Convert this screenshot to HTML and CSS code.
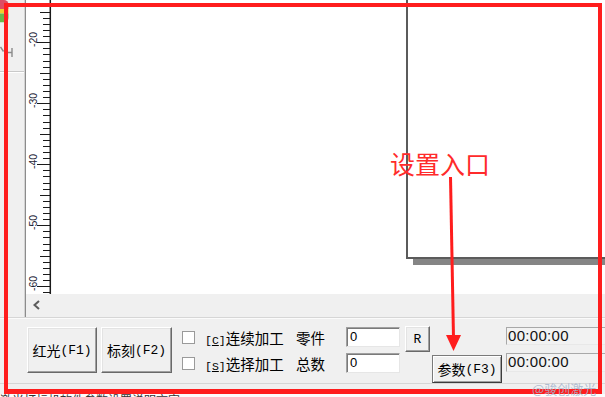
FILE: index.html
```html
<!DOCTYPE html>
<html lang="zh-CN">
<head>
<meta charset="utf-8">
<title>设置入口</title>
<link rel="stylesheet" href="styles.css">
</head>
<body>
<div class="app">
  <div class="top">
    <div class="toolstrip">
      <svg class="lamp" width="10" height="23" viewBox="0 0 10 23">
        <defs>
          <clipPath id="lampclip"><rect x="-6" y="0" width="14.5" height="22.5" rx="4.5"/></clipPath>
        </defs>
        <g clip-path="url(#lampclip)">
          <rect x="-6" y="0" width="16" height="9" fill="#dd4d63"/>
          <rect x="-6" y="9" width="16" height="4.5" fill="#f2cf2a"/>
          <rect x="-6" y="13.5" width="16" height="9" fill="#69b94a"/>
        </g>
      </svg>
      <svg class="tool-glyph" width="14" height="14" viewBox="0 0 14 14">
        <path d="M0.5 2 L3.5 6.5 M12 3 V12 M6.5 7.5 H12" stroke="#8a8a8a" stroke-width="1.4" fill="none"/>
      </svg>
      <div class="tool-sep"></div>
    </div>
    <div class="view">
      <div class="canvas">
        <svg class="ruler" width="26" height="294" viewBox="0 0 26 294">
          <path class="ticks" d="M17 6.5H24M17 18.5H24M17 24.5H24M17 30.5H24M17 36.5H24M17 48.5H24M17 54.5H24M17 61.5H24M17 67.5H24M17 79.5H24M17 85.5H24M17 91.5H24M17 97.5H24M17 109.5H24M17 115.5H24M17 122.5H24M17 128.5H24M17 140.5H24M17 146.5H24M17 152.5H24M17 158.5H24M17 170.5H24M17 176.5H24M17 183.5H24M17 189.5H24M17 201.5H24M17 207.5H24M17 213.5H24M17 219.5H24M17 231.5H24M17 237.5H24M17 244.5H24M17 250.5H24M17 262.5H24M17 268.5H24M17 274.5H24M17 280.5H24M17 292.5H24M14 12.5H24M14 73.5H24M14 134.5H24M14 195.5H24M14 256.5H24M11 42.5H24M11 103.5H24M11 164.5H24M11 225.5H24M11 286.5H24"/>
          <line class="baseline" x1="24.3" y1="0" x2="24.3" y2="294"/>
          <text class="rlabel" transform="translate(10.5 47) rotate(-90)">-20</text>
          <text class="rlabel" transform="translate(10.5 108) rotate(-90)">-30</text>
          <text class="rlabel" transform="translate(10.5 169) rotate(-90)">-40</text>
          <text class="rlabel" transform="translate(10.5 230) rotate(-90)">-50</text>
          <text class="rlabel" transform="translate(10.5 291) rotate(-90)">-60</text>
        </svg>
        <div class="page"></div>
      </div>
      <div class="hscroll">
        <svg class="scroll-left" width="20" height="23" viewBox="0 0 20 23">
          <path d="M13 7 L8.5 11 L13 15" stroke="#5c5c5c" stroke-width="2" fill="none"/>
        </svg>
      </div>
    </div>
  </div>

  <div class="panel">
    <button class="btn btn-big">红光<span class="lat">(F1)</span></button>
    <button class="btn btn-big btn-second">标刻<span class="lat">(F2)</span></button>
    <div class="controls">
      <span class="check r1"></span>
      <span class="label r1"><span class="lat-s">[<u>C</u>]</span>连续加工</span>
      <span class="count-label r1">零件</span>
      <span class="field r1">0</span>
      <button class="btn btn-r r1"><span class="lat">R</span></button>
      <span class="time r1">00:00:00</span>

      <span class="check r2"></span>
      <span class="label r2"><span class="lat-s">[<u>S</u>]</span>选择加工</span>
      <span class="count-label r2">总数</span>
      <span class="field r2">0</span>
      <button class="btn btn-param r2">参数<span class="lat">(F3)</span></button>
      <span class="time r2">00:00:00</span>
    </div>
  </div>
  <div class="panel-foot"></div>
  <div class="footer"><span class="footer-text">激光打标机软件参数设置说明文字</span></div>

  <div class="annot-box"></div>
  <div class="annot-text">设置入口</div>
  <svg class="annot-arrow" width="605" height="397" viewBox="0 0 605 397">
    <path d="M450.5 177 L453.5 338" stroke="#ff1d1d" stroke-width="3" fill="none"/>
    <polygon points="446,335 461,335 453.5,351" fill="#ff1d1d"/>
  </svg>
  <div class="watermark">@骏创激光</div>
</div>
</body>
</html>
```

FILE: styles.css
```css
* { box-sizing: border-box; }

html, body {
  margin: 0;
  padding: 0;
}

body {
  width: 605px;
  height: 397px;
  overflow: hidden;
  background: #f0f0f0;
  font-family: "Noto Sans CJK SC", sans-serif;
  color: #000;
}

.app {
  position: relative;
  width: 605px;
  height: 397px;
  display: flex;
  flex-direction: column;
  overflow: hidden;
}

/* ---------- top area ---------- */
.top {
  display: flex;
  height: 317px;
  flex: none;
}

.toolstrip {
  width: 25px;
  flex: none;
  border-right: 1px solid #d3d3d3;
  display: flex;
  flex-direction: column;
}

.lamp { display: block; }

.tool-glyph {
  display: block;
  margin-top: 22px;
}

.tool-sep {
  margin-top: 12px;
  height: 2px;
  border-top: 1px solid #c9c9c9;
  border-bottom: 1px solid #ffffff;
}

.view {
  flex: 1;
  min-width: 0;
  border-left: 1px solid #8c8c8c;
  display: flex;
  flex-direction: column;
}

.canvas {
  height: 294px;
  flex: none;
  background: #fff;
  position: relative;
  overflow: hidden;
}

.ruler {
  position: absolute;
  left: 0;
  top: 0;
  display: block;
}

.ticks {
  stroke: #1a1a1a;
  stroke-width: 1;
  fill: none;
}

.baseline {
  stroke: #1a1a1a;
  stroke-width: 1.5;
}

.rlabel {
  font-family: "Liberation Sans", sans-serif;
  font-size: 10.5px;
  fill: #1f2637;
}

.page {
  position: absolute;
  left: 380px;
  top: -4px;
  width: 320px;
  height: 263px;
  background: #fff;
  border-left: 2px solid #5b5b5b;
  border-bottom: 2px solid #5b5b5b;
  box-shadow: 7px 6px 0 #858585;
}

.hscroll {
  height: 23px;
  flex: none;
  background: #f0f0f0;
}

.scroll-left { display: block; }

/* ---------- bottom panel ---------- */
.panel {
  height: 67px;
  flex: none;
  border-top: 1px solid #d6d6d6;
  border-bottom: 1px solid #d6d6d6;
  box-shadow: inset 0 1px 0 #fbfbfb;
  display: flex;
  align-items: flex-start;
  padding: 9px 0 0 27px;
  overflow: hidden;
}

.btn {
  margin: 0;
  padding: 0;
  background: #f0f0f0;
  border: 1px solid;
  border-color: #ffffff #696969 #696969 #ffffff;
  box-shadow: inset -1px -1px 0 #a0a0a0, inset 1px 1px 0 #e3e3e3;
  font-family: "Noto Sans CJK SC", sans-serif;
  font-size: 14px;
  line-height: 1;
  color: #000;
  display: flex;
  align-items: center;
  justify-content: center;
}

.lat {
  font-family: "Liberation Mono", monospace;
  font-size: 13px;
}

.lat-s {
  font-family: "Liberation Mono", monospace;
  font-size: 11.5px;
}

.btn-big {
  width: 70px;
  height: 46px;
  flex: none;
}

.btn-second {
  width: 71px;
  margin-left: 4px;
}

.controls {
  margin-left: 10px;
  flex: 1;
  display: grid;
  grid-template-columns: 13px 101px 50px 59px 27px 74px 1fr;
  grid-template-rows: 26px 26px;
}

.r1 { grid-row: 1; }
.r2 { grid-row: 2; }

.check {
  grid-column: 1;
  width: 13px;
  height: 13px;
  margin-top: 4px;
  background: #fff;
  border: 1px solid #9a9a9a;
}

.label {
  grid-column: 2;
  padding-left: 10px;
  font-size: 14.5px;
  line-height: 20px;
  margin-top: 1px;
  white-space: nowrap;
}

.label u { text-underline-offset: 1px; }

.count-label {
  grid-column: 3;
  font-size: 14.5px;
  line-height: 20px;
  margin-top: 1px;
  white-space: nowrap;
}

.field {
  grid-column: 4;
  width: 54px;
  height: 20px;
  background: #fff;
  border: 1px solid;
  border-color: #a0a0a0 #e6e6e6 #e6e6e6 #a0a0a0;
  box-shadow: inset 1px 1px 0 #7a7a7a;
  font-family: "Liberation Sans", sans-serif;
  font-size: 13px;
  line-height: 18px;
  padding-left: 3px;
}

.btn-r {
  grid-column: 5;
  width: 25px;
  height: 26px;
  margin-top: -1px;
}

.btn-param {
  grid-column: 6;
  width: 70px;
  height: 28px;
  margin-top: 2px;
  border-color: #7a7a7a #3c3c3c #3c3c3c #7a7a7a;
  box-shadow: inset 1px 1px 0 #ffffff, inset -1px -1px 0 #a0a0a0;
}

.time {
  grid-column: 7;
  width: 110px;
  height: 18px;
  background: #f2f2f2;
  border: 1px solid;
  border-color: #a8a8a8 #e8e8e8 #e8e8e8 #a8a8a8;
  font-family: "Liberation Sans", sans-serif;
  font-size: 15px;
  line-height: 16px;
  letter-spacing: 0.3px;
  padding-left: 1px;
  color: #111;
  white-space: nowrap;
}

.time.r2 { height: 19px; }

.panel-foot {
  height: 10px;
  flex: none;
}

.footer {
  height: 3px;
  flex: none;
  background: #fdfdfd;
  overflow: hidden;
}

.footer-text {
  display: block;
  font-size: 12px;
  line-height: 12px;
  margin-top: 0;
  color: #333;
  white-space: nowrap;
}

/* ---------- annotations over the screenshot ---------- */
.annot-box {
  position: absolute;
  left: 4px;
  top: 3px;
  width: 598px;
  height: 391px;
  border: 4px solid #ff1d1d;
  border-bottom-width: 5px;
  pointer-events: none;
}

.annot-text {
  position: absolute;
  left: 390px;
  top: 149px;
  font-family: "Noto Sans CJK SC", sans-serif;
  font-size: 25px;
  line-height: 28px;
  color: #ff2b2b;
  white-space: nowrap;
}

.annot-arrow {
  position: absolute;
  left: 0;
  top: 0;
  pointer-events: none;
}

.watermark {
  position: absolute;
  left: 532px;
  top: 382px;
  font-family: "Noto Sans CJK SC", sans-serif;
  font-size: 13px;
  line-height: 14px;
  color: rgba(165, 180, 205, 0.85);
  white-space: nowrap;
}
```
